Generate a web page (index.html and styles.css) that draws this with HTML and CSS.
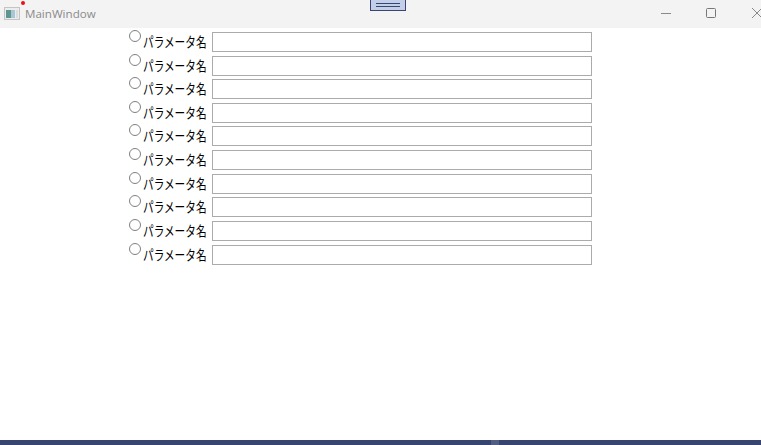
FILE: index.html
```html
<!DOCTYPE html>
<html lang="ja">
<head>
<meta charset="UTF-8" />
<title>MainWindow</title>
<link rel="stylesheet" href="styles.css">
</head>
<body>

<div class="window">
  <header class="titlebar">
    <div class="title-left">
      <svg class="app-icon" width="16" height="13" viewBox="0 0 16 13">
        <rect x="0.5" y="0.5" width="15" height="12" fill="#ececec" stroke="#c4c4c4" />
        <rect x="2" y="3" width="5" height="8" fill="#5f9790" />
        <rect x="7" y="3" width="4" height="8" fill="#a9c6d6" />
        <rect x="12" y="3" width="2" height="8" fill="#dcdcdc" />
      </svg>
      <span class="title-text">MainWindow</span>
      <span class="red-dot"></span>
    </div>
    <div class="debug-tab"><span></span><span></span></div>
    <div class="controls">
      <svg width="12" height="12" viewBox="0 0 12 12"><path d="M1 6.5H11" stroke="#8a8a8a" fill="none" /></svg>
      <svg width="12" height="12" viewBox="0 0 12 12"><rect x="1.5" y="1.5" width="9" height="9" rx="1" stroke="#777" fill="none" /></svg>
      <svg class="close" width="12" height="12" viewBox="0 0 12 12"><path d="M1 1L11 11M11 1L1 11" stroke="#888" fill="none" /></svg>
    </div>
  </header>

  <main class="params">
    <div class="row"><label class="param"><span class="radio"></span><span class="name">パラメータ名</span></label><input class="field" type="text" /></div>
    <div class="row"><label class="param"><span class="radio"></span><span class="name">パラメータ名</span></label><input class="field" type="text" /></div>
    <div class="row"><label class="param"><span class="radio"></span><span class="name">パラメータ名</span></label><input class="field" type="text" /></div>
    <div class="row"><label class="param"><span class="radio"></span><span class="name">パラメータ名</span></label><input class="field" type="text" /></div>
    <div class="row"><label class="param"><span class="radio"></span><span class="name">パラメータ名</span></label><input class="field" type="text" /></div>
    <div class="row"><label class="param"><span class="radio"></span><span class="name">パラメータ名</span></label><input class="field" type="text" /></div>
    <div class="row"><label class="param"><span class="radio"></span><span class="name">パラメータ名</span></label><input class="field" type="text" /></div>
    <div class="row"><label class="param"><span class="radio"></span><span class="name">パラメータ名</span></label><input class="field" type="text" /></div>
    <div class="row"><label class="param"><span class="radio"></span><span class="name">パラメータ名</span></label><input class="field" type="text" /></div>
    <div class="row"><label class="param"><span class="radio"></span><span class="name">パラメータ名</span></label><input class="field" type="text" /></div>
  </main>

  <div class="taskbar"><span class="taskbar-mark"></span></div>
</div>

</body>
</html>
```

FILE: styles.css
```css
* {
  box-sizing: border-box;
}
html, body {
  margin: 0;
  height: 100%;
  overflow: hidden;
}
body {
  background: #fff;
  font-family: "Noto Sans CJK JP", "Noto Sans", sans-serif;
  color: #000;
}
.window {
  height: 445px;
  display: flex;
  flex-direction: column;
}

.titlebar {
  height: 28px;
  flex: none;
  background: #f3f3f3;
  display: flex;
  justify-content: space-between;
  position: relative;
}
.title-left {
  display: flex;
  align-items: center;
  gap: 5px;
  padding-left: 4px;
  height: 27px;
}
.app-icon {
  display: block;
}
.title-text {
  font-family: "Open Sans", "Noto Sans", sans-serif;
  font-size: 11.6px;
  color: #8a8a8a;
}
.red-dot {
  position: absolute;
  left: 21px;
  top: 1px;
  width: 4px;
  height: 4px;
  border-radius: 50%;
  background: #e8101c;
}
.debug-tab {
  position: absolute;
  left: 370px;
  top: 0;
  width: 36px;
  height: 11px;
  background: #c3cfe9;
  border: 1px solid #3a4672;
  border-top: none;
  display: flex;
  flex-direction: column;
  align-items: center;
  gap: 2px;
  padding-top: 3px;
}
.debug-tab span {
  display: block;
  width: 24px;
  height: 1px;
  background: #3a4672;
}
.controls {
  display: flex;
  align-items: center;
  gap: 33px;
  margin-right: -2px;
  padding-bottom: 3px;
}
.close {
  margin-left: 1px;
}

.params {
  flex: 1;
  padding: 3.95px 0 0 129px;
  display: flex;
  flex-direction: column;
  gap: 3.625px;
}
.row {
  display: flex;
  height: 20px;
  gap: 5px;
}
.param {
  display: flex;
  width: 78px;
}
.radio {
  width: 12px;
  height: 12px;
  margin-top: -2px;
  flex: none;
  border: 1px solid #808080;
  border-radius: 50%;
  background: #fff;
}
.name {
  margin-left: 2px;
  font-size: 14px;
  line-height: 19px;
  white-space: nowrap;
  /* 源フォントのカナは幅が狭い */
  transform: scaleX(0.76);
  transform-origin: left center;
}
.field {
  width: 380px;
  height: 20px;
  margin: 0;
  padding: 0 2px;
  border: 1px solid #ababab;
  border-radius: 0;
  background: #fff;
  outline: none;
}

.taskbar {
  height: 5px;
  flex: none;
  background: #36446f;
  position: relative;
}
.taskbar-mark {
  position: absolute;
  left: 491px;
  top: 0;
  width: 8px;
  height: 5px;
  background: #525d82;
}
```
